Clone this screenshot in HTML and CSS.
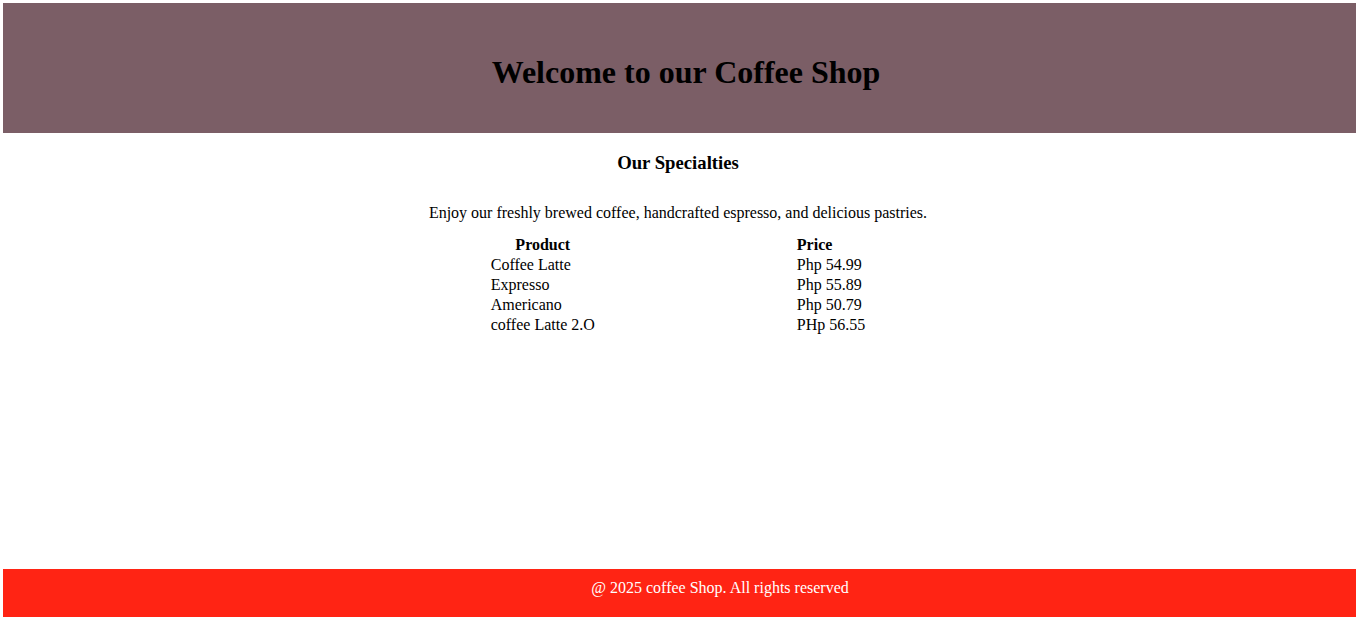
FILE: index.html
```html
<!DOCTYPE html>
<html lang="en">
<head>
<meta charset="utf-8">
<title>Coffee Shop</title>
<link rel="stylesheet" href="styles.css">
</head>
<body>
<header class="site-header">
  <h1 class="site-title">Welcome to our Coffee Shop</h1>
</header>
<main class="content">
  <h3 class="section-title">Our Specialties</h3>
  <p class="intro">Enjoy our freshly brewed coffee, handcrafted espresso, and delicious pastries.</p>
  <table class="menu">
    <thead>
      <tr><th class="col-product">Product</th><th class="col-price">Price</th></tr>
    </thead>
    <tbody>
      <tr><td class="cell-product">Coffee Latte</td><td>Php 54.99</td></tr>
      <tr><td class="cell-product">Expresso</td><td>Php 55.89</td></tr>
      <tr><td class="cell-product">Americano</td><td>Php 50.79</td></tr>
      <tr><td class="cell-product">coffee Latte 2.O</td><td>PHp 56.55</td></tr>
    </tbody>
  </table>
</main>
<footer class="site-footer">@ 2025 coffee Shop. All rights reserved</footer>
</body>
</html>
```

FILE: styles.css
```css
html, body {
  overflow: hidden;
}
body {
  margin: 3px 0 3px 3px;
  font-family: "Liberation Serif", "Times New Roman", serif;
  font-size: 16px;
  color: #000;
  background: #fff;
}
.site-header {
  background: #7b5e66;
  padding: 30px 3px 20px 16px;
  text-align: center;
}
.site-title {
  margin: 21.44px 0;
  font-size: 32px;
  font-weight: bold;
}
.content {
  text-align: center;
  padding-right: 3px;
}
.section-title {
  margin: 18.72px 0 0;
  font-size: 18.72px;
}
.intro {
  margin: 30px 0 12px;
}
.menu {
  margin: 0 auto;
  border-spacing: 200px 2px;
  text-align: left;
}
.menu th,
.menu td {
  padding: 0;
  line-height: 18px;
}
.menu .col-product,
.menu .cell-product {
  padding-right: 2px;
}
.menu .col-product {
  text-align: center;
}
.menu .col-price {
  text-align: left;
}
.site-footer {
  position: fixed;
  left: 3px;
  right: 0;
  bottom: 0;
  background: #ff2414;
  color: #fff;
  text-align: center;
  padding: 10px 0 20px 81px;
}
```
